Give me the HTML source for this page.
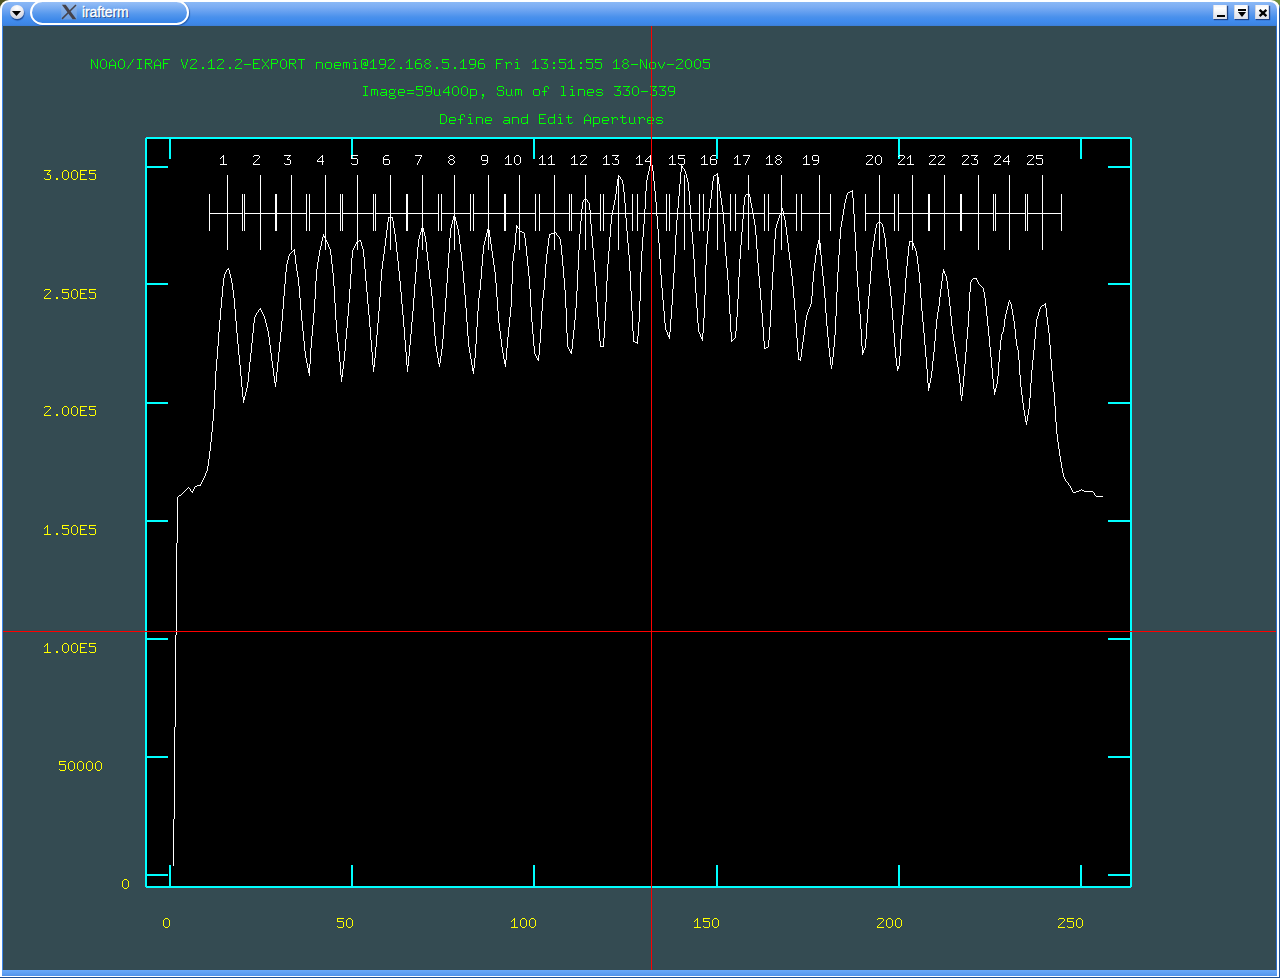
<!DOCTYPE html>
<html><head><meta charset="utf-8"><title>irafterm</title>
<style>

html,body{margin:0;padding:0;}
body{width:1280px;height:978px;overflow:hidden;background:#4d5222;position:relative;font-family:"Liberation Sans",sans-serif;}
#win{position:absolute;left:0;top:0;width:1280px;height:978px;background:#fff;border-radius:9px 9px 0 0;overflow:hidden;}
#edge{position:absolute;left:0;top:0;width:1279px;height:977px;border-right:1px solid #1c4f96;border-bottom:1px solid #1c4f96;}
#tb{position:absolute;left:2px;top:2px;width:1275px;height:24px;border-radius:7px 7px 0 0;
 background:linear-gradient(#8ab8f6 0px,#7cadf3 5px,#649ff0 10px,#4a91ec 15px,#3f8bee 19px,#3d84e2 23px,#3a7cd4 24px);}
#lb{position:absolute;left:2px;top:26px;width:1px;height:950px;background:#3d86e6;}
#rb{position:absolute;left:1276px;top:26px;width:1px;height:950px;background:#2c6cc4;}
#bb{position:absolute;left:2px;top:970px;width:1275px;height:6px;background:linear-gradient(#68a8f9,#5c9df1 60%,#4f92ea);}
#cv{position:absolute;left:3px;top:26px;width:1273px;height:944px;background:#344b52;}
#pill{position:absolute;left:30px;top:0px;width:155px;height:20.5px;border:2px solid #fff;border-radius:12.5px;box-sizing:content-box;
 background:linear-gradient(#96bff7 0px,#78acf2 6px,#5598ed 12px,#418bea 17px,#3884e8 20px);box-shadow:1px 1px 1px rgba(20,60,130,.55);}
#title{position:absolute;left:82px;top:3px;font-size:14px;line-height:18px;color:#fff;text-shadow:1px 1px 0 #1a4280;-webkit-text-stroke:0.35px #fff;letter-spacing:-0.1px;}
#menu{position:absolute;left:9.5px;top:5px;width:14px;height:14px;border-radius:50%;
 background:radial-gradient(circle at 50% 22%,#fff 0,#ececf2 40%,#d2d4de 75%,#c4c8d6 100%);box-shadow:0.5px 1.5px 1px rgba(15,50,120,.75);}
.btn{position:absolute;top:5px;width:14px;height:14px;background:linear-gradient(#f4f4f8 0,#fff 25%,#eceef3 60%,#dcdfe8 100%);box-shadow:1px 1px 1px rgba(15,45,110,.8),inset 1px 0 0 #d4d8e2,inset -1px 0 0 #d4d8e2;}
#trc{position:absolute;left:1268px;top:0;width:12px;height:12px;background:#6e8c3a;}
svg{position:absolute;left:0;top:0;}

</style></head><body>
<div id="trc"></div><div id="win"><div id="edge"></div><div id="tb"></div><div id="lb"></div><div id="rb"></div><div id="bb"></div><div id="cv"></div>
<div id="menu"></div><div id="pill"></div>
<div id="title">irafterm</div>
<div class="btn" style="left:1213px"></div><div class="btn" style="left:1234px"></div><div class="btn" style="left:1255px"></div>
<svg width="1280" height="978" viewBox="0 0 1280 978">
<g><rect x="61.2" y="4.3" width="15.6" height="15.2" fill="#a9bbd6" opacity=".38"/><path d="M61.9 4.8 L65.7 4.8 L76.4 19.3 L72.6 19.3 Z" fill="#45424a"/><path d="M76 5 L62 18.9" stroke="#47444c" stroke-width="1.5" fill="none"/></g>
<g fill="#000"><path d="M11.9 10.9 L21 10.9 L16.45 16 Z"/><rect x="1217" y="15" width="8" height="2"/>
<rect x="1238" y="9" width="8" height="2"/><path d="M1238 12 L1246 12 L1242 17 Z"/>
<path d="M1259.6 9.8 L1266.4 16.2 M1266.4 9.8 L1259.6 16.2" stroke="#000" stroke-width="2.3" fill="none"/></g>
<g shape-rendering="crispEdges">
<rect x="144.5" y="136.5" width="988" height="752" fill="none" stroke="#3e454d" stroke-width="1"/>
<rect x="146" y="138" width="985" height="749" fill="#000" stroke="#00ffff" stroke-width="2"/>
<rect x="145" y="137" width="1" height="1" fill="#3e454d"/>
<rect x="1131" y="137" width="1" height="1" fill="#3e454d"/>
<rect x="145" y="887" width="1" height="1" fill="#3e454d"/>
<rect x="1131" y="887" width="1" height="1" fill="#3e454d"/>
<rect x="169" y="139" width="2" height="20" fill="#00ffff"/>
<rect x="169" y="865" width="2" height="21" fill="#00ffff"/>
<rect x="351" y="139" width="2" height="20" fill="#00ffff"/>
<rect x="351" y="865" width="2" height="21" fill="#00ffff"/>
<rect x="533" y="139" width="2" height="20" fill="#00ffff"/>
<rect x="533" y="865" width="2" height="21" fill="#00ffff"/>
<rect x="716" y="139" width="2" height="20" fill="#00ffff"/>
<rect x="716" y="865" width="2" height="21" fill="#00ffff"/>
<rect x="898" y="139" width="2" height="20" fill="#00ffff"/>
<rect x="898" y="865" width="2" height="21" fill="#00ffff"/>
<rect x="1080" y="139" width="2" height="20" fill="#00ffff"/>
<rect x="1080" y="865" width="2" height="21" fill="#00ffff"/>
<rect x="147" y="166" width="21" height="2" fill="#00ffff"/>
<rect x="1108" y="166" width="22" height="2" fill="#00ffff"/>
<rect x="147" y="283" width="21" height="2" fill="#00ffff"/>
<rect x="1108" y="283" width="22" height="2" fill="#00ffff"/>
<rect x="147" y="402" width="21" height="2" fill="#00ffff"/>
<rect x="1108" y="402" width="22" height="2" fill="#00ffff"/>
<rect x="147" y="520" width="21" height="2" fill="#00ffff"/>
<rect x="1108" y="520" width="22" height="2" fill="#00ffff"/>
<rect x="147" y="638" width="21" height="2" fill="#00ffff"/>
<rect x="1108" y="638" width="22" height="2" fill="#00ffff"/>
<rect x="147" y="756" width="21" height="2" fill="#00ffff"/>
<rect x="1108" y="756" width="22" height="2" fill="#00ffff"/>
<rect x="147" y="874" width="21" height="2" fill="#00ffff"/>
<rect x="1108" y="874" width="22" height="2" fill="#00ffff"/>
<rect x="227" y="175" width="1" height="75" fill="#fff"/>
<rect x="260" y="175" width="1" height="75" fill="#fff"/>
<rect x="291" y="175" width="1" height="75" fill="#fff"/>
<rect x="325" y="175" width="1" height="75" fill="#fff"/>
<rect x="357" y="175" width="1" height="75" fill="#fff"/>
<rect x="390" y="175" width="1" height="75" fill="#fff"/>
<rect x="422" y="175" width="1" height="75" fill="#fff"/>
<rect x="454" y="175" width="1" height="75" fill="#fff"/>
<rect x="488" y="175" width="1" height="75" fill="#fff"/>
<rect x="519" y="175" width="1" height="75" fill="#fff"/>
<rect x="554" y="175" width="1" height="75" fill="#fff"/>
<rect x="585" y="175" width="1" height="75" fill="#fff"/>
<rect x="618" y="175" width="1" height="75" fill="#fff"/>
<rect x="651" y="175" width="1" height="75" fill="#fff"/>
<rect x="684" y="175" width="1" height="75" fill="#fff"/>
<rect x="717" y="175" width="1" height="75" fill="#fff"/>
<rect x="748" y="175" width="1" height="75" fill="#fff"/>
<rect x="781" y="175" width="1" height="75" fill="#fff"/>
<rect x="819" y="175" width="1" height="75" fill="#fff"/>
<rect x="879" y="175" width="1" height="75" fill="#fff"/>
<rect x="912" y="175" width="1" height="75" fill="#fff"/>
<rect x="944" y="175" width="1" height="75" fill="#fff"/>
<rect x="978" y="175" width="1" height="75" fill="#fff"/>
<rect x="1009" y="175" width="1" height="75" fill="#fff"/>
<rect x="1042" y="175" width="1" height="75" fill="#fff"/>
<rect x="209" y="213" width="34" height="1" fill="#fff"/>
<rect x="244" y="213" width="32" height="1" fill="#fff"/>
<rect x="276" y="213" width="31" height="1" fill="#fff"/>
<rect x="309" y="213" width="32" height="1" fill="#fff"/>
<rect x="342" y="213" width="32" height="1" fill="#fff"/>
<rect x="375" y="213" width="32" height="1" fill="#fff"/>
<rect x="407" y="213" width="32" height="1" fill="#fff"/>
<rect x="441" y="213" width="30" height="1" fill="#fff"/>
<rect x="473" y="213" width="32" height="1" fill="#fff"/>
<rect x="505" y="213" width="31" height="1" fill="#fff"/>
<rect x="539" y="213" width="31" height="1" fill="#fff"/>
<rect x="571" y="213" width="30" height="1" fill="#fff"/>
<rect x="603" y="213" width="30" height="1" fill="#fff"/>
<rect x="637" y="213" width="30" height="1" fill="#fff"/>
<rect x="669" y="213" width="31" height="1" fill="#fff"/>
<rect x="703" y="213" width="28" height="1" fill="#fff"/>
<rect x="735" y="213" width="30" height="1" fill="#fff"/>
<rect x="768" y="213" width="29" height="1" fill="#fff"/>
<rect x="801" y="213" width="30" height="1" fill="#fff"/>
<rect x="865" y="213" width="30" height="1" fill="#fff"/>
<rect x="898" y="213" width="31" height="1" fill="#fff"/>
<rect x="929" y="213" width="32" height="1" fill="#fff"/>
<rect x="961" y="213" width="33" height="1" fill="#fff"/>
<rect x="995" y="213" width="31" height="1" fill="#fff"/>
<rect x="1027" y="213" width="35" height="1" fill="#fff"/>
<rect x="209" y="194" width="1" height="37" fill="#fff"/>
<rect x="242" y="194" width="1" height="37" fill="#fff"/>
<rect x="244" y="194" width="1" height="37" fill="#fff"/>
<rect x="275" y="194" width="1" height="37" fill="#fff"/>
<rect x="276" y="194" width="1" height="37" fill="#fff"/>
<rect x="306" y="194" width="1" height="37" fill="#fff"/>
<rect x="309" y="194" width="1" height="37" fill="#fff"/>
<rect x="340" y="194" width="1" height="37" fill="#fff"/>
<rect x="342" y="194" width="1" height="37" fill="#fff"/>
<rect x="373" y="194" width="1" height="37" fill="#fff"/>
<rect x="375" y="194" width="1" height="37" fill="#fff"/>
<rect x="406" y="194" width="1" height="37" fill="#fff"/>
<rect x="407" y="194" width="1" height="37" fill="#fff"/>
<rect x="438" y="194" width="1" height="37" fill="#fff"/>
<rect x="441" y="194" width="1" height="37" fill="#fff"/>
<rect x="470" y="194" width="1" height="37" fill="#fff"/>
<rect x="473" y="194" width="1" height="37" fill="#fff"/>
<rect x="504" y="194" width="1" height="37" fill="#fff"/>
<rect x="505" y="194" width="1" height="37" fill="#fff"/>
<rect x="535" y="194" width="1" height="37" fill="#fff"/>
<rect x="539" y="194" width="1" height="37" fill="#fff"/>
<rect x="569" y="194" width="1" height="37" fill="#fff"/>
<rect x="571" y="194" width="1" height="37" fill="#fff"/>
<rect x="600" y="194" width="1" height="37" fill="#fff"/>
<rect x="603" y="194" width="1" height="37" fill="#fff"/>
<rect x="632" y="194" width="1" height="37" fill="#fff"/>
<rect x="637" y="194" width="1" height="37" fill="#fff"/>
<rect x="666" y="194" width="1" height="37" fill="#fff"/>
<rect x="669" y="194" width="1" height="37" fill="#fff"/>
<rect x="699" y="194" width="1" height="37" fill="#fff"/>
<rect x="703" y="194" width="1" height="37" fill="#fff"/>
<rect x="730" y="194" width="1" height="37" fill="#fff"/>
<rect x="735" y="194" width="1" height="37" fill="#fff"/>
<rect x="764" y="194" width="1" height="37" fill="#fff"/>
<rect x="768" y="194" width="1" height="37" fill="#fff"/>
<rect x="796" y="194" width="1" height="37" fill="#fff"/>
<rect x="801" y="194" width="1" height="37" fill="#fff"/>
<rect x="830" y="194" width="1" height="37" fill="#fff"/>
<rect x="865" y="194" width="1" height="37" fill="#fff"/>
<rect x="894" y="194" width="1" height="37" fill="#fff"/>
<rect x="898" y="194" width="1" height="37" fill="#fff"/>
<rect x="928" y="194" width="1" height="37" fill="#fff"/>
<rect x="929" y="194" width="1" height="37" fill="#fff"/>
<rect x="960" y="194" width="1" height="37" fill="#fff"/>
<rect x="961" y="194" width="1" height="37" fill="#fff"/>
<rect x="993" y="194" width="1" height="37" fill="#fff"/>
<rect x="995" y="194" width="1" height="37" fill="#fff"/>
<rect x="1025" y="194" width="1" height="37" fill="#fff"/>
<rect x="1027" y="194" width="1" height="37" fill="#fff"/>
<rect x="1061" y="194" width="1" height="37" fill="#fff"/>
<path d="M173 819h1v47h-1zM174 727h1v92h-1zM175 635h1v92h-1zM176 543h1v92h-1zM177 497h1v46h-1zM178 496h1v1h-1zM179 495h1v1h-1zM180 495h1v1h-1zM181 494h1v1h-1zM182 493h1v1h-1zM183 492h1v1h-1zM184 491h1v1h-1zM185 490h1v1h-1zM186 489h1v1h-1zM187 488h1v1h-1zM188 487h1v1h-1zM189 488h1v1h-1zM190 489h1v2h-1zM191 491h1v1h-1zM192 491h1v2h-1zM193 489h1v2h-1zM194 487h1v2h-1zM195 486h1v1h-1zM196 486h1v1h-1zM197 485h1v1h-1zM198 485h1v1h-1zM199 485h1v1h-1zM200 484h1v2h-1zM201 482h1v2h-1zM202 480h1v2h-1zM203 478h1v2h-1zM204 476h1v2h-1zM205 473h1v3h-1zM206 471h1v2h-1zM207 466h1v5h-1zM208 459h1v7h-1zM209 451h1v8h-1zM210 442h1v9h-1zM211 432h1v10h-1zM212 421h1v11h-1zM213 409h1v12h-1zM214 390h1v19h-1zM215 371h1v19h-1zM216 359h1v12h-1zM217 346h1v13h-1zM218 332h1v14h-1zM219 320h1v12h-1zM220 308h1v12h-1zM221 297h1v11h-1zM222 286h1v11h-1zM223 278h1v8h-1zM224 274h1v4h-1zM225 272h1v2h-1zM226 270h1v2h-1zM227 269h1v1h-1zM228 268h1v2h-1zM229 270h1v4h-1zM230 274h1v4h-1zM231 278h1v5h-1zM232 283h1v7h-1zM233 290h1v8h-1zM234 298h1v11h-1zM235 309h1v12h-1zM236 321h1v12h-1zM237 333h1v11h-1zM238 344h1v11h-1zM239 355h1v10h-1zM240 365h1v11h-1zM241 376h1v11h-1zM242 387h1v10h-1zM243 397h1v6h-1zM244 396h1v4h-1zM245 392h1v4h-1zM246 388h1v4h-1zM247 382h1v6h-1zM248 372h1v10h-1zM249 362h1v10h-1zM250 353h1v9h-1zM251 343h1v10h-1zM252 333h1v10h-1zM253 323h1v10h-1zM254 317h1v6h-1zM255 315h1v2h-1zM256 313h1v2h-1zM257 312h1v1h-1zM258 310h1v2h-1zM259 309h1v1h-1zM260 308h1v2h-1zM261 310h1v2h-1zM262 312h1v2h-1zM263 314h1v2h-1zM264 316h1v3h-1zM265 319h1v4h-1zM266 323h1v4h-1zM267 327h1v4h-1zM268 331h1v6h-1zM269 337h1v8h-1zM270 345h1v8h-1zM271 353h1v8h-1zM272 361h1v7h-1zM273 368h1v8h-1zM274 376h1v7h-1zM275 382h1v5h-1zM276 372h1v10h-1zM277 362h1v10h-1zM278 352h1v10h-1zM279 342h1v10h-1zM280 332h1v10h-1zM281 321h1v11h-1zM282 309h1v12h-1zM283 296h1v13h-1zM284 284h1v12h-1zM285 272h1v12h-1zM286 264h1v8h-1zM287 260h1v4h-1zM288 256h1v4h-1zM289 254h1v2h-1zM290 253h1v1h-1zM291 252h1v1h-1zM292 251h1v1h-1zM293 250h1v1h-1zM294 249h1v6h-1zM295 255h1v9h-1zM296 264h1v7h-1zM297 271h1v6h-1zM298 277h1v9h-1zM299 286h1v12h-1zM300 298h1v12h-1zM301 310h1v11h-1zM302 321h1v10h-1zM303 331h1v10h-1zM304 341h1v10h-1zM305 351h1v7h-1zM306 358h1v5h-1zM307 363h1v5h-1zM308 368h1v5h-1zM309 364h1v12h-1zM310 348h1v16h-1zM311 336h1v12h-1zM312 325h1v11h-1zM313 313h1v12h-1zM314 299h1v14h-1zM315 281h1v18h-1zM316 269h1v12h-1zM317 262h1v7h-1zM318 256h1v6h-1zM319 250h1v6h-1zM320 246h1v4h-1zM321 241h1v5h-1zM322 237h1v4h-1zM323 234h1v3h-1zM324 236h1v2h-1zM325 238h1v2h-1zM326 240h1v2h-1zM327 242h1v2h-1zM328 244h1v3h-1zM329 247h1v2h-1zM330 249h1v6h-1zM331 255h1v9h-1zM332 264h1v9h-1zM333 273h1v13h-1zM334 286h1v17h-1zM335 303h1v17h-1zM336 320h1v13h-1zM337 333h1v9h-1zM338 342h1v9h-1zM339 351h1v11h-1zM340 362h1v13h-1zM341 375h1v7h-1zM342 369h1v8h-1zM343 361h1v8h-1zM344 351h1v10h-1zM345 339h1v12h-1zM346 328h1v11h-1zM347 316h1v12h-1zM348 303h1v13h-1zM349 289h1v14h-1zM350 274h1v15h-1zM351 258h1v16h-1zM352 250h1v8h-1zM353 248h1v2h-1zM354 246h1v2h-1zM355 244h1v2h-1zM356 242h1v2h-1zM357 241h1v1h-1zM358 241h1v1h-1zM359 240h1v1h-1zM360 240h1v2h-1zM361 242h1v4h-1zM362 246h1v3h-1zM363 249h1v8h-1zM364 257h1v12h-1zM365 269h1v12h-1zM366 281h1v11h-1zM367 292h1v12h-1zM368 304h1v11h-1zM369 315h1v12h-1zM370 327h1v13h-1zM371 340h1v12h-1zM372 352h1v13h-1zM373 365h1v7h-1zM374 358h1v9h-1zM375 347h1v11h-1zM376 335h1v12h-1zM377 323h1v12h-1zM378 311h1v12h-1zM379 297h1v14h-1zM380 281h1v16h-1zM381 269h1v12h-1zM382 261h1v8h-1zM383 254h1v7h-1zM384 246h1v8h-1zM385 238h1v8h-1zM386 230h1v8h-1zM387 222h1v8h-1zM388 217h1v5h-1zM389 217h1v1h-1zM390 217h1v1h-1zM391 217h1v1h-1zM392 217h1v4h-1zM393 221h1v7h-1zM394 228h1v6h-1zM395 234h1v8h-1zM396 242h1v10h-1zM397 252h1v9h-1zM398 261h1v10h-1zM399 271h1v10h-1zM400 281h1v11h-1zM401 292h1v12h-1zM402 304h1v11h-1zM403 315h1v12h-1zM404 327h1v13h-1zM405 340h1v12h-1zM406 352h1v13h-1zM407 365h1v7h-1zM408 356h1v10h-1zM409 345h1v11h-1zM410 334h1v11h-1zM411 322h1v12h-1zM412 311h1v11h-1zM413 298h1v13h-1zM414 284h1v14h-1zM415 272h1v12h-1zM416 259h1v13h-1zM417 247h1v12h-1zM418 239h1v8h-1zM419 235h1v4h-1zM420 232h1v3h-1zM421 228h1v4h-1zM422 226h1v2h-1zM423 228h1v4h-1zM424 232h1v4h-1zM425 236h1v6h-1zM426 242h1v10h-1zM427 252h1v9h-1zM428 261h1v9h-1zM429 270h1v9h-1zM430 279h1v8h-1zM431 287h1v9h-1zM432 296h1v12h-1zM433 308h1v14h-1zM434 322h1v14h-1zM435 336h1v10h-1zM436 346h1v6h-1zM437 352h1v6h-1zM438 358h1v6h-1zM439 363h1v4h-1zM440 356h1v7h-1zM441 349h1v7h-1zM442 339h1v10h-1zM443 325h1v14h-1zM444 312h1v13h-1zM445 298h1v14h-1zM446 283h1v15h-1zM447 268h1v15h-1zM448 253h1v15h-1zM449 238h1v15h-1zM450 228h1v10h-1zM451 224h1v4h-1zM452 220h1v4h-1zM453 216h1v4h-1zM454 214h1v3h-1zM455 217h1v4h-1zM456 221h1v4h-1zM457 225h1v4h-1zM458 229h1v6h-1zM459 235h1v9h-1zM460 244h1v8h-1zM461 252h1v9h-1zM462 261h1v10h-1zM463 271h1v12h-1zM464 283h1v12h-1zM465 295h1v13h-1zM466 308h1v14h-1zM467 322h1v14h-1zM468 336h1v11h-1zM469 347h1v6h-1zM470 353h1v6h-1zM471 359h1v6h-1zM472 365h1v6h-1zM473 368h1v6h-1zM474 358h1v10h-1zM475 344h1v14h-1zM476 327h1v17h-1zM477 311h1v16h-1zM478 298h1v13h-1zM479 290h1v8h-1zM480 279h1v11h-1zM481 266h1v13h-1zM482 254h1v12h-1zM483 245h1v9h-1zM484 241h1v4h-1zM485 237h1v4h-1zM486 233h1v4h-1zM487 229h1v4h-1zM488 226h1v4h-1zM489 230h1v7h-1zM490 237h1v7h-1zM491 244h1v7h-1zM492 251h1v7h-1zM493 258h1v7h-1zM494 265h1v7h-1zM495 272h1v11h-1zM496 283h1v14h-1zM497 297h1v14h-1zM498 311h1v12h-1zM499 323h1v8h-1zM500 331h1v8h-1zM501 339h1v8h-1zM502 347h1v6h-1zM503 353h1v6h-1zM504 359h1v5h-1zM505 360h1v7h-1zM506 348h1v12h-1zM507 337h1v11h-1zM508 327h1v10h-1zM509 317h1v10h-1zM510 307h1v10h-1zM511 284h1v23h-1zM512 261h1v23h-1zM513 253h1v8h-1zM514 245h1v8h-1zM515 233h1v12h-1zM516 225h1v8h-1zM517 226h1v2h-1zM518 228h1v1h-1zM519 229h1v2h-1zM520 231h1v1h-1zM521 231h1v1h-1zM522 232h1v1h-1zM523 232h1v1h-1zM524 233h1v5h-1zM525 238h1v8h-1zM526 246h1v10h-1zM527 256h1v10h-1zM528 266h1v10h-1zM529 276h1v13h-1zM530 289h1v18h-1zM531 307h1v15h-1zM532 322h1v12h-1zM533 334h1v12h-1zM534 346h1v8h-1zM535 354h1v2h-1zM536 356h1v2h-1zM537 358h1v2h-1zM538 355h1v6h-1zM539 343h1v12h-1zM540 329h1v14h-1zM541 311h1v18h-1zM542 298h1v13h-1zM543 290h1v8h-1zM544 278h1v12h-1zM545 264h1v14h-1zM546 254h1v10h-1zM547 246h1v8h-1zM548 238h1v8h-1zM549 234h1v4h-1zM550 234h1v1h-1zM551 233h1v1h-1zM552 233h1v1h-1zM553 233h1v1h-1zM554 232h1v1h-1zM555 232h1v1h-1zM556 233h1v2h-1zM557 235h1v1h-1zM558 236h1v1h-1zM559 237h1v2h-1zM560 239h1v6h-1zM561 245h1v10h-1zM562 255h1v11h-1zM563 266h1v12h-1zM564 278h1v12h-1zM565 290h1v18h-1zM566 308h1v25h-1zM567 333h1v14h-1zM568 347h1v2h-1zM569 349h1v2h-1zM570 351h1v2h-1zM571 349h1v5h-1zM572 339h1v10h-1zM573 330h1v9h-1zM574 320h1v10h-1zM575 308h1v12h-1zM576 291h1v17h-1zM577 270h1v21h-1zM578 250h1v20h-1zM579 234h1v16h-1zM580 221h1v13h-1zM581 209h1v12h-1zM582 202h1v7h-1zM583 200h1v2h-1zM584 199h1v1h-1zM585 198h1v1h-1zM586 199h1v1h-1zM587 200h1v2h-1zM588 202h1v1h-1zM589 203h1v7h-1zM590 210h1v14h-1zM591 224h1v12h-1zM592 236h1v12h-1zM593 248h1v12h-1zM594 260h1v12h-1zM595 272h1v14h-1zM596 286h1v16h-1zM597 302h1v15h-1zM598 317h1v12h-1zM599 329h1v12h-1zM600 341h1v6h-1zM601 346h1v1h-1zM602 346h1v1h-1zM603 338h1v9h-1zM604 321h1v17h-1zM605 302h1v19h-1zM606 281h1v21h-1zM607 264h1v17h-1zM608 251h1v13h-1zM609 237h1v14h-1zM610 224h1v13h-1zM611 215h1v9h-1zM612 210h1v5h-1zM613 205h1v5h-1zM614 200h1v5h-1zM615 194h1v6h-1zM616 186h1v8h-1zM617 179h1v7h-1zM618 175h1v4h-1zM619 176h1v1h-1zM620 177h1v2h-1zM621 179h1v1h-1zM622 180h1v4h-1zM623 184h1v8h-1zM624 192h1v11h-1zM625 203h1v15h-1zM626 218h1v13h-1zM627 231h1v12h-1zM628 243h1v12h-1zM629 255h1v16h-1zM630 271h1v20h-1zM631 291h1v20h-1zM632 311h1v20h-1zM633 331h1v11h-1zM634 341h1v1h-1zM635 342h1v1h-1zM636 342h1v1h-1zM637 336h1v8h-1zM638 322h1v14h-1zM639 301h1v21h-1zM640 272h1v29h-1zM641 251h1v21h-1zM642 237h1v14h-1zM643 224h1v13h-1zM644 209h1v15h-1zM645 191h1v18h-1zM646 180h1v11h-1zM647 175h1v5h-1zM648 171h1v4h-1zM649 166h1v5h-1zM650 163h1v3h-1zM651 164h1v1h-1zM652 165h1v6h-1zM653 171h1v10h-1zM654 181h1v10h-1zM655 191h1v11h-1zM656 202h1v14h-1zM657 216h1v13h-1zM658 229h1v14h-1zM659 243h1v16h-1zM660 259h1v16h-1zM661 275h1v13h-1zM662 288h1v12h-1zM663 300h1v11h-1zM664 311h1v12h-1zM665 323h1v7h-1zM666 330h1v2h-1zM667 332h1v3h-1zM668 335h1v2h-1zM669 332h1v7h-1zM670 319h1v13h-1zM671 305h1v14h-1zM672 289h1v16h-1zM673 273h1v16h-1zM674 255h1v18h-1zM675 235h1v20h-1zM676 220h1v15h-1zM677 208h1v12h-1zM678 196h1v12h-1zM679 184h1v12h-1zM680 172h1v12h-1zM681 165h1v7h-1zM682 166h1v2h-1zM683 168h1v1h-1zM684 169h1v2h-1zM685 171h1v3h-1zM686 174h1v4h-1zM687 178h1v4h-1zM688 182h1v9h-1zM689 191h1v14h-1zM690 205h1v14h-1zM691 219h1v13h-1zM692 232h1v12h-1zM693 244h1v15h-1zM694 259h1v18h-1zM695 277h1v16h-1zM696 293h1v15h-1zM697 308h1v15h-1zM698 323h1v9h-1zM699 332h1v2h-1zM700 334h1v3h-1zM701 337h1v2h-1zM702 333h1v8h-1zM703 318h1v15h-1zM704 295h1v23h-1zM705 265h1v30h-1zM706 244h1v21h-1zM707 231h1v13h-1zM708 219h1v12h-1zM709 208h1v11h-1zM710 199h1v9h-1zM711 190h1v9h-1zM712 181h1v9h-1zM713 176h1v5h-1zM714 175h1v1h-1zM715 175h1v1h-1zM716 174h1v1h-1zM717 173h1v4h-1zM718 177h1v7h-1zM719 184h1v7h-1zM720 191h1v7h-1zM721 198h1v7h-1zM722 205h1v7h-1zM723 212h1v12h-1zM724 224h1v18h-1zM725 242h1v14h-1zM726 256h1v12h-1zM727 268h1v12h-1zM728 280h1v15h-1zM729 295h1v19h-1zM730 314h1v18h-1zM731 332h1v10h-1zM732 340h1v1h-1zM733 339h1v1h-1zM734 338h1v1h-1zM735 331h1v7h-1zM736 317h1v14h-1zM737 299h1v18h-1zM738 277h1v22h-1zM739 259h1v18h-1zM740 245h1v14h-1zM741 232h1v13h-1zM742 219h1v13h-1zM743 205h1v14h-1zM744 197h1v8h-1zM745 195h1v2h-1zM746 194h1v1h-1zM747 194h1v1h-1zM748 194h1v1h-1zM749 194h1v3h-1zM750 197h1v6h-1zM751 203h1v5h-1zM752 208h1v5h-1zM753 213h1v6h-1zM754 219h1v6h-1zM755 225h1v10h-1zM756 235h1v14h-1zM757 249h1v14h-1zM758 263h1v13h-1zM759 276h1v12h-1zM760 288h1v12h-1zM761 300h1v13h-1zM762 313h1v14h-1zM763 327h1v14h-1zM764 341h1v8h-1zM765 348h1v1h-1zM766 347h1v1h-1zM767 347h1v1h-1zM768 340h1v7h-1zM769 327h1v13h-1zM770 310h1v17h-1zM771 290h1v20h-1zM772 272h1v18h-1zM773 255h1v17h-1zM774 239h1v16h-1zM775 228h1v11h-1zM776 224h1v4h-1zM777 221h1v3h-1zM778 218h1v3h-1zM779 215h1v3h-1zM780 213h1v2h-1zM781 210h1v3h-1zM782 208h1v3h-1zM783 211h1v5h-1zM784 216h1v4h-1zM785 220h1v7h-1zM786 227h1v8h-1zM787 235h1v8h-1zM788 243h1v9h-1zM789 252h1v8h-1zM790 260h1v8h-1zM791 268h1v8h-1zM792 276h1v10h-1zM793 286h1v12h-1zM794 298h1v12h-1zM795 310h1v13h-1zM796 323h1v15h-1zM797 338h1v14h-1zM798 352h1v8h-1zM799 359h1v1h-1zM800 357h1v4h-1zM801 349h1v8h-1zM802 342h1v7h-1zM803 335h1v7h-1zM804 327h1v8h-1zM805 320h1v7h-1zM806 315h1v5h-1zM807 312h1v3h-1zM808 309h1v3h-1zM809 307h1v2h-1zM810 304h1v3h-1zM811 296h1v8h-1zM812 282h1v14h-1zM813 271h1v11h-1zM814 263h1v8h-1zM815 255h1v8h-1zM816 248h1v7h-1zM817 244h1v4h-1zM818 240h1v4h-1zM819 237h1v6h-1zM820 243h1v12h-1zM821 255h1v11h-1zM822 266h1v10h-1zM823 276h1v10h-1zM824 286h1v12h-1zM825 298h1v15h-1zM826 313h1v13h-1zM827 326h1v11h-1zM828 337h1v11h-1zM829 348h1v9h-1zM830 357h1v8h-1zM831 365h1v4h-1zM832 357h1v8h-1zM833 347h1v10h-1zM834 335h1v12h-1zM835 316h1v19h-1zM836 292h1v24h-1zM837 272h1v20h-1zM838 255h1v17h-1zM839 239h1v16h-1zM840 227h1v12h-1zM841 221h1v6h-1zM842 215h1v6h-1zM843 209h1v6h-1zM844 203h1v6h-1zM845 199h1v4h-1zM846 195h1v4h-1zM847 193h1v2h-1zM848 192h1v1h-1zM849 192h1v1h-1zM850 191h1v1h-1zM851 191h1v1h-1zM852 190h1v8h-1zM853 198h1v16h-1zM854 214h1v18h-1zM855 232h1v19h-1zM856 251h1v20h-1zM857 271h1v16h-1zM858 287h1v14h-1zM859 301h1v13h-1zM860 314h1v15h-1zM861 329h1v17h-1zM862 346h1v9h-1zM863 350h1v3h-1zM864 348h1v2h-1zM865 339h1v9h-1zM866 323h1v16h-1zM867 309h1v14h-1zM868 296h1v13h-1zM869 284h1v12h-1zM870 271h1v13h-1zM871 257h1v14h-1zM872 247h1v10h-1zM873 241h1v6h-1zM874 234h1v7h-1zM875 228h1v6h-1zM876 224h1v4h-1zM877 223h1v1h-1zM878 222h1v1h-1zM879 221h1v1h-1zM880 222h1v1h-1zM881 223h1v1h-1zM882 224h1v3h-1zM883 227h1v6h-1zM884 233h1v5h-1zM885 238h1v9h-1zM886 247h1v12h-1zM887 259h1v11h-1zM888 270h1v8h-1zM889 278h1v8h-1zM890 286h1v10h-1zM891 296h1v12h-1zM892 308h1v12h-1zM893 320h1v13h-1zM894 333h1v14h-1zM895 347h1v11h-1zM896 358h1v8h-1zM897 366h1v5h-1zM898 366h1v3h-1zM899 356h1v10h-1zM900 339h1v17h-1zM901 325h1v14h-1zM902 315h1v10h-1zM903 305h1v10h-1zM904 293h1v12h-1zM905 278h1v15h-1zM906 266h1v12h-1zM907 256h1v10h-1zM908 246h1v10h-1zM909 241h1v5h-1zM910 241h1v1h-1zM911 241h1v1h-1zM912 241h1v2h-1zM913 243h1v3h-1zM914 246h1v2h-1zM915 248h1v3h-1zM916 251h1v5h-1zM917 256h1v8h-1zM918 264h1v8h-1zM919 272h1v11h-1zM920 283h1v15h-1zM921 298h1v13h-1zM922 311h1v11h-1zM923 322h1v11h-1zM924 333h1v12h-1zM925 345h1v12h-1zM926 357h1v12h-1zM927 369h1v14h-1zM928 383h1v8h-1zM929 383h1v5h-1zM930 378h1v5h-1zM931 371h1v7h-1zM932 361h1v10h-1zM933 352h1v9h-1zM934 341h1v11h-1zM935 329h1v12h-1zM936 319h1v10h-1zM937 312h1v7h-1zM938 306h1v6h-1zM939 297h1v9h-1zM940 289h1v8h-1zM941 281h1v8h-1zM942 273h1v8h-1zM943 269h1v4h-1zM944 271h1v3h-1zM945 274h1v2h-1zM946 276h1v5h-1zM947 281h1v8h-1zM948 289h1v8h-1zM949 297h1v9h-1zM950 306h1v10h-1zM951 316h1v10h-1zM952 326h1v8h-1zM953 334h1v7h-1zM954 341h1v6h-1zM955 347h1v7h-1zM956 354h1v7h-1zM957 361h1v6h-1zM958 367h1v7h-1zM959 374h1v9h-1zM960 383h1v12h-1zM961 395h1v6h-1zM962 387h1v9h-1zM963 376h1v11h-1zM964 364h1v12h-1zM965 352h1v12h-1zM966 339h1v13h-1zM967 327h1v12h-1zM968 311h1v16h-1zM969 292h1v19h-1zM970 282h1v10h-1zM971 280h1v2h-1zM972 279h1v1h-1zM973 278h1v1h-1zM974 278h1v1h-1zM975 278h1v1h-1zM976 278h1v2h-1zM977 280h1v2h-1zM978 282h1v2h-1zM979 284h1v1h-1zM980 285h1v1h-1zM981 286h1v1h-1zM982 287h1v1h-1zM983 288h1v4h-1zM984 292h1v6h-1zM985 298h1v8h-1zM986 306h1v10h-1zM987 316h1v10h-1zM988 326h1v10h-1zM989 336h1v11h-1zM990 347h1v10h-1zM991 357h1v11h-1zM992 368h1v11h-1zM993 379h1v10h-1zM994 389h1v6h-1zM995 388h1v4h-1zM996 384h1v4h-1zM997 376h1v8h-1zM998 362h1v14h-1zM999 350h1v12h-1zM1000 340h1v10h-1zM1001 334h1v6h-1zM1002 332h1v2h-1zM1003 327h1v5h-1zM1004 319h1v8h-1zM1005 314h1v5h-1zM1006 310h1v4h-1zM1007 306h1v4h-1zM1008 302h1v4h-1zM1009 300h1v2h-1zM1010 302h1v2h-1zM1011 304h1v5h-1zM1012 309h1v6h-1zM1013 315h1v6h-1zM1014 321h1v8h-1zM1015 329h1v10h-1zM1016 339h1v7h-1zM1017 346h1v4h-1zM1018 350h1v10h-1zM1019 360h1v15h-1zM1020 375h1v12h-1zM1021 387h1v8h-1zM1022 395h1v8h-1zM1023 403h1v7h-1zM1024 410h1v6h-1zM1025 416h1v6h-1zM1026 421h1v4h-1zM1027 415h1v6h-1zM1028 409h1v6h-1zM1029 398h1v11h-1zM1030 383h1v15h-1zM1031 370h1v13h-1zM1032 360h1v10h-1zM1033 350h1v10h-1zM1034 339h1v11h-1zM1035 327h1v12h-1zM1036 319h1v8h-1zM1037 316h1v3h-1zM1038 312h1v4h-1zM1039 309h1v3h-1zM1040 307h1v2h-1zM1041 306h1v1h-1zM1042 305h1v1h-1zM1043 305h1v1h-1zM1044 304h1v1h-1zM1045 303h1v5h-1zM1046 308h1v9h-1zM1047 317h1v8h-1zM1048 325h1v8h-1zM1049 333h1v12h-1zM1050 345h1v14h-1zM1051 359h1v12h-1zM1052 371h1v11h-1zM1053 382h1v10h-1zM1054 392h1v14h-1zM1055 406h1v16h-1zM1056 422h1v12h-1zM1057 434h1v8h-1zM1058 442h1v7h-1zM1059 449h1v7h-1zM1060 456h1v6h-1zM1061 462h1v6h-1zM1062 468h1v5h-1zM1063 473h1v4h-1zM1064 477h1v2h-1zM1065 479h1v2h-1zM1066 481h1v1h-1zM1067 482h1v1h-1zM1068 483h1v2h-1zM1069 485h1v1h-1zM1070 486h1v2h-1zM1071 488h1v2h-1zM1072 490h1v2h-1zM1073 492h1v1h-1zM1074 492h1v1h-1zM1075 492h1v1h-1zM1076 491h1v1h-1zM1077 491h1v1h-1zM1078 491h1v1h-1zM1079 490h1v1h-1zM1080 490h1v1h-1zM1081 489h1v1h-1zM1082 490h1v1h-1zM1083 490h1v1h-1zM1084 491h1v1h-1zM1085 491h1v1h-1zM1086 491h1v1h-1zM1087 491h1v1h-1zM1088 491h1v1h-1zM1089 491h1v1h-1zM1090 491h1v1h-1zM1091 491h1v1h-1zM1092 491h1v1h-1zM1093 492h1v1h-1zM1094 493h1v2h-1zM1095 495h1v1h-1zM1096 496h1v1h-1zM1097 496h1v1h-1zM1098 496h1v1h-1zM1099 496h1v1h-1zM1100 496h1v1h-1zM1101 496h1v1h-1zM1102 496h1v1h-1z" fill="#fff"/>
</g>
<path d="M91 60.5h2M96 67.5h2M91.5 59v1M91.5 61v8M93.5 61v2M94.5 63v2M95.5 65v2M97.5 59v8M97.5 68v1M102 59.5h3M102 68.5h3M100.5 61v6M101.5 60v1M101.5 67v1M105.5 60v1M105.5 67v1M106.5 61v6M109 65.5h7M109.5 62v3M109.5 66v3M110.5 61v1M111.5 60v1M112.5 59v1M113.5 60v1M114.5 61v1M115.5 62v3M115.5 66v3M120 59.5h3M120 68.5h3M118.5 61v6M119.5 60v1M119.5 67v1M123.5 60v1M123.5 67v1M124.5 61v6M127.5 68v1M128.5 66v2M129.5 65v1M130.5 63v2M131.5 62v1M132.5 60v2M133.5 59v1M137 59.5h5M137 68.5h5M139.5 60v8M145 59.5h6M145 63.5h6M145.5 60v3M145.5 64v5M148.5 64v1M149.5 65v1M150.5 66v1M151.5 60v3M151.5 67v2M154 65.5h7M154.5 62v3M154.5 66v3M155.5 61v1M156.5 60v1M157.5 59v1M158.5 60v1M159.5 61v1M160.5 62v3M160.5 66v3M163 59.5h7M163 63.5h5M163.5 60v3M163.5 64v5M181.5 59v3M182.5 62v3M183.5 65v3M184.5 68v1M185.5 65v3M186.5 62v3M187.5 59v3M191 59.5h5M190 68.5h7M190.5 60v1M190.5 67v1M191.5 66v1M192.5 65v1M193.5 64v1M194.5 63v1M195.5 62v1M196.5 60v2M202 67.5h2M202 68.5h2M210 60.5h2M208 68.5h7M208.5 62v1M209.5 61v1M211.5 59v1M211.5 61v7M218 59.5h5M217 68.5h7M217.5 60v1M217.5 67v1M218.5 66v1M219.5 65v1M220.5 64v1M221.5 63v1M222.5 62v1M223.5 60v2M229 67.5h2M229 68.5h2M236 59.5h5M235 68.5h7M235.5 60v1M235.5 67v1M236.5 66v1M237.5 65v1M238.5 64v1M239.5 63v1M240.5 62v1M241.5 60v2M244 64.5h7M253 59.5h7M253 63.5h5M253 68.5h7M253.5 60v3M253.5 64v4M262.5 59v2M262.5 67v2M263.5 61v1M263.5 66v1M264.5 62v1M264.5 65v1M265.5 63v2M266.5 62v1M266.5 65v1M267.5 61v1M267.5 66v1M268.5 59v2M268.5 67v2M271 59.5h6M271 63.5h6M271.5 60v3M271.5 64v5M277.5 60v3M282 59.5h3M282 68.5h3M280.5 61v6M281.5 60v1M281.5 67v1M285.5 60v1M285.5 67v1M286.5 61v6M289 59.5h6M289 63.5h6M289.5 60v3M289.5 64v5M292.5 64v1M293.5 65v1M294.5 66v1M295.5 60v3M295.5 67v2M298 59.5h7M301.5 60v9M316 62.5h6M316.5 63v6M322.5 63v6M326 62.5h5M326 68.5h5M325.5 63v5M331.5 63v5M335 62.5h5M334 65.5h7M335 68.5h5M334.5 63v2M334.5 66v2M340.5 63v2M343 62.5h6M343.5 63v6M346.5 63v5M349.5 63v6M354 59.5h2M353 62.5h3M353 68.5h5M355.5 63v5M362 59.5h5M364 62.5h2M364 65.5h4M362 68.5h5M361.5 60v8M363.5 63v2M365.5 63v2M367.5 60v5M372 60.5h2M370 68.5h7M370.5 62v1M371.5 61v1M373.5 59v1M373.5 61v7M380 59.5h5M380 64.5h6M380 68.5h4M379.5 60v4M384.5 67v1M385.5 60v4M385.5 65v2M389 59.5h5M388 68.5h7M388.5 60v1M388.5 67v1M389.5 66v1M390.5 65v1M391.5 64v1M392.5 63v1M393.5 62v1M394.5 60v2M400 67.5h2M400 68.5h2M408 60.5h2M406 68.5h7M406.5 62v1M407.5 61v1M409.5 59v1M409.5 61v7M417 59.5h4M415 63.5h6M416 68.5h5M415.5 61v2M415.5 64v4M416.5 60v1M421.5 64v4M426 59.5h3M426 63.5h3M426 68.5h3M424.5 61v1M424.5 65v2M425.5 60v1M425.5 62v1M425.5 64v1M425.5 67v1M429.5 60v1M429.5 62v1M429.5 64v1M429.5 67v1M430.5 61v1M430.5 65v2M436 67.5h2M436 68.5h2M442 59.5h7M442 62.5h6M443 68.5h5M442.5 60v2M442.5 67v1M448.5 63v5M454 67.5h2M454 68.5h2M462 60.5h2M460 68.5h7M460.5 62v1M461.5 61v1M463.5 59v1M463.5 61v7M470 59.5h5M470 64.5h6M470 68.5h4M469.5 60v4M474.5 67v1M475.5 60v4M475.5 65v2M480 59.5h4M478 63.5h6M479 68.5h5M478.5 61v2M478.5 64v4M479.5 60v1M484.5 64v4M496 59.5h7M496 63.5h5M496.5 60v3M496.5 64v5M505 62.5h2M508 62.5h3M506 63.5h2M506.5 64v5M511.5 63v2M516 59.5h2M515 62.5h3M515 68.5h5M517.5 63v5M534 60.5h2M532 68.5h7M532.5 62v1M533.5 61v1M535.5 59v1M535.5 61v7M541 59.5h7M544 63.5h3M542 68.5h5M541.5 67v1M544.5 62v1M545.5 61v1M546.5 60v1M547.5 64v4M553 62.5h2M553 63.5h2M553 67.5h2M553 68.5h2M559 59.5h7M559 62.5h6M560 68.5h5M559.5 60v2M559.5 67v1M565.5 63v5M570 60.5h2M568 68.5h7M568.5 62v1M569.5 61v1M571.5 59v1M571.5 61v7M580 62.5h2M580 63.5h2M580 67.5h2M580 68.5h2M586 59.5h7M586 62.5h6M587 68.5h5M586.5 60v2M586.5 67v1M592.5 63v5M595 59.5h7M595 62.5h6M596 68.5h5M595.5 60v2M595.5 67v1M601.5 63v5M615 60.5h2M613 68.5h7M613.5 62v1M614.5 61v1M616.5 59v1M616.5 61v7M624 59.5h3M624 63.5h3M624 68.5h3M622.5 61v1M622.5 65v2M623.5 60v1M623.5 62v1M623.5 64v1M623.5 67v1M627.5 60v1M627.5 62v1M627.5 64v1M627.5 67v1M628.5 61v1M628.5 65v2M631 64.5h7M640 60.5h2M645 67.5h2M640.5 59v1M640.5 61v8M642.5 61v2M643.5 63v2M644.5 65v2M646.5 59v8M646.5 68v1M650 62.5h5M650 68.5h5M649.5 63v5M655.5 63v5M658.5 62v2M659.5 64v2M660.5 66v2M661.5 68v1M662.5 66v2M663.5 64v2M664.5 62v2M667 64.5h7M677 59.5h5M676 68.5h7M676.5 60v1M676.5 67v1M677.5 66v1M678.5 65v1M679.5 64v1M680.5 63v1M681.5 62v1M682.5 60v2M687 59.5h3M687 68.5h3M685.5 61v6M686.5 60v1M686.5 67v1M690.5 60v1M690.5 67v1M691.5 61v6M696 59.5h3M696 68.5h3M694.5 61v6M695.5 60v1M695.5 67v1M699.5 60v1M699.5 67v1M700.5 61v6M703 59.5h7M703 62.5h6M704 68.5h5M703.5 60v2M703.5 67v1M709.5 63v5M363 86.5h5M363 95.5h5M365.5 87v8M371 89.5h6M371.5 90v6M374.5 90v5M377.5 90v6M381 89.5h5M381 92.5h6M385 94.5h2M381 95.5h4M380.5 93v2M386.5 90v2M386.5 93v1M386.5 95v1M390 89.5h4M390 93.5h4M390 95.5h5M390 98.5h5M389.5 90v3M389.5 94v1M389.5 96v2M394.5 90v3M395.5 89v1M395.5 96v2M399 89.5h5M398 92.5h7M399 95.5h5M398.5 90v2M398.5 93v2M404.5 90v2M407 90.5h7M407 93.5h7M416 86.5h7M416 89.5h6M417 95.5h5M416.5 87v2M416.5 94v1M422.5 90v5M426 86.5h5M426 91.5h6M426 95.5h4M425.5 87v4M430.5 94v1M431.5 87v4M431.5 92v2M435 95.5h4M434.5 89v6M439.5 89v6M440.5 95v1M447 87.5h2M443 92.5h7M443.5 91v1M444.5 90v1M445.5 89v1M446.5 88v1M448.5 86v1M448.5 88v4M448.5 93v3M454 86.5h3M454 95.5h3M452.5 88v6M453.5 87v1M453.5 94v1M457.5 87v1M457.5 94v1M458.5 88v6M463 86.5h3M463 95.5h3M461.5 88v6M462.5 87v1M462.5 94v1M466.5 87v1M466.5 94v1M467.5 88v6M470 89.5h6M470 95.5h6M470.5 90v5M470.5 96v3M476.5 90v5M482 94.5h2M482 95.5h2M482.5 97v2M483.5 96v1M498 86.5h5M498 90.5h5M498 95.5h5M497.5 87v3M497.5 93v2M503.5 87v2M503.5 91v4M507 95.5h4M506.5 89v6M511.5 89v6M512.5 95v1M515 89.5h6M515.5 90v6M518.5 90v5M521.5 90v6M534 89.5h5M534 95.5h5M533.5 90v5M539.5 90v5M545 86.5h3M542 91.5h5M544.5 87v4M544.5 92v4M548.5 87v2M561 86.5h3M561 95.5h5M563.5 87v8M571 86.5h2M570 89.5h3M570 95.5h5M572.5 90v5M578 89.5h6M578.5 90v6M584.5 90v6M588 89.5h5M587 92.5h7M588 95.5h5M587.5 90v2M587.5 93v2M593.5 90v2M597 89.5h5M597 92.5h5M597 95.5h5M596.5 90v2M596.5 94v1M602.5 90v1M602.5 93v2M614 86.5h7M617 90.5h3M615 95.5h5M614.5 94v1M617.5 89v1M618.5 88v1M619.5 87v1M620.5 91v4M623 86.5h7M626 90.5h3M624 95.5h5M623.5 94v1M626.5 89v1M627.5 88v1M628.5 87v1M629.5 91v4M634 86.5h3M634 95.5h3M632.5 88v6M633.5 87v1M633.5 94v1M637.5 87v1M637.5 94v1M638.5 88v6M641 91.5h7M650 86.5h7M653 90.5h3M651 95.5h5M650.5 94v1M653.5 89v1M654.5 88v1M655.5 87v1M656.5 91v4M659 86.5h7M662 90.5h3M660 95.5h5M659.5 94v1M662.5 89v1M663.5 88v1M664.5 87v1M665.5 91v4M669 86.5h5M669 91.5h6M669 95.5h4M668.5 87v4M673.5 94v1M674.5 87v4M674.5 92v2M440 114.5h5M440 123.5h5M440.5 115v8M445.5 115v1M445.5 122v1M446.5 116v6M450 117.5h5M449 120.5h7M450 123.5h5M449.5 118v2M449.5 121v2M455.5 118v2M461 114.5h3M458 119.5h5M460.5 115v4M460.5 120v4M464.5 115v2M469 114.5h2M468 117.5h3M468 123.5h5M470.5 118v5M476 117.5h6M476.5 118v6M482.5 118v6M486 117.5h5M485 120.5h7M486 123.5h5M485.5 118v2M485.5 121v2M491.5 118v2M504 117.5h5M504 120.5h6M508 122.5h2M504 123.5h4M503.5 121v2M509.5 118v2M509.5 121v1M509.5 123v1M512 117.5h6M512.5 118v6M518.5 118v6M522 117.5h6M526 122.5h2M522 123.5h4M521.5 118v5M527.5 114v3M527.5 118v4M527.5 123v1M539 114.5h7M539 118.5h5M539 123.5h7M539.5 115v3M539.5 119v4M549 117.5h6M553 122.5h2M549 123.5h4M548.5 118v5M554.5 114v3M554.5 118v4M554.5 123v1M559 114.5h2M558 117.5h3M558 123.5h5M560.5 118v5M566 117.5h6M569 123.5h3M568.5 115v2M568.5 118v5M572.5 122v1M584 120.5h7M584.5 117v3M584.5 121v3M585.5 116v1M586.5 115v1M587.5 114v1M588.5 115v1M589.5 116v1M590.5 117v3M590.5 121v3M593 117.5h6M593 123.5h6M593.5 118v5M593.5 124v3M599.5 118v5M603 117.5h5M602 120.5h7M603 123.5h5M602.5 118v2M602.5 121v2M608.5 118v2M611 117.5h2M614 117.5h3M612 118.5h2M612.5 119v5M617.5 118v2M620 117.5h6M623 123.5h3M622.5 115v2M622.5 118v5M626.5 122v1M630 123.5h4M629.5 117v6M634.5 117v6M635.5 123v1M638 117.5h2M641 117.5h3M639 118.5h2M639.5 119v5M644.5 118v2M648 117.5h5M647 120.5h7M648 123.5h5M647.5 118v2M647.5 121v2M653.5 118v2M657 117.5h5M657 120.5h5M657 123.5h5M656.5 118v2M656.5 122v1M662.5 118v1M662.5 121v2" stroke="#00ff00" stroke-width="1" fill="none" shape-rendering="crispEdges"/>
<path d="M44 170.5h7M47 174.5h3M45 179.5h5M44.5 178v1M47.5 173v1M48.5 172v1M49.5 171v1M50.5 175v4M56 178.5h2M56 179.5h2M64 170.5h3M64 179.5h3M62.5 172v6M63.5 171v1M63.5 178v1M67.5 171v1M67.5 178v1M68.5 172v6M73 170.5h3M73 179.5h3M71.5 172v6M72.5 171v1M72.5 178v1M76.5 171v1M76.5 178v1M77.5 172v6M80 170.5h7M80 174.5h5M80 179.5h7M80.5 171v3M80.5 175v4M89 170.5h7M89 173.5h6M90 179.5h5M89.5 171v2M89.5 178v1M95.5 174v5M45 289.5h5M44 298.5h7M44.5 290v1M44.5 297v1M45.5 296v1M46.5 295v1M47.5 294v1M48.5 293v1M49.5 292v1M50.5 290v2M56 297.5h2M56 298.5h2M62 289.5h7M62 292.5h6M63 298.5h5M62.5 290v2M62.5 297v1M68.5 293v5M73 289.5h3M73 298.5h3M71.5 291v6M72.5 290v1M72.5 297v1M76.5 290v1M76.5 297v1M77.5 291v6M80 289.5h7M80 293.5h5M80 298.5h7M80.5 290v3M80.5 294v4M89 289.5h7M89 292.5h6M90 298.5h5M89.5 290v2M89.5 297v1M95.5 293v5M45 406.5h5M44 415.5h7M44.5 407v1M44.5 414v1M45.5 413v1M46.5 412v1M47.5 411v1M48.5 410v1M49.5 409v1M50.5 407v2M56 414.5h2M56 415.5h2M64 406.5h3M64 415.5h3M62.5 408v6M63.5 407v1M63.5 414v1M67.5 407v1M67.5 414v1M68.5 408v6M73 406.5h3M73 415.5h3M71.5 408v6M72.5 407v1M72.5 414v1M76.5 407v1M76.5 414v1M77.5 408v6M80 406.5h7M80 410.5h5M80 415.5h7M80.5 407v3M80.5 411v4M89 406.5h7M89 409.5h6M90 415.5h5M89.5 407v2M89.5 414v1M95.5 410v5M46 526.5h2M44 534.5h7M44.5 528v1M45.5 527v1M47.5 525v1M47.5 527v7M56 533.5h2M56 534.5h2M62 525.5h7M62 528.5h6M63 534.5h5M62.5 526v2M62.5 533v1M68.5 529v5M73 525.5h3M73 534.5h3M71.5 527v6M72.5 526v1M72.5 533v1M76.5 526v1M76.5 533v1M77.5 527v6M80 525.5h7M80 529.5h5M80 534.5h7M80.5 526v3M80.5 530v4M89 525.5h7M89 528.5h6M90 534.5h5M89.5 526v2M89.5 533v1M95.5 529v5M46 644.5h2M44 652.5h7M44.5 646v1M45.5 645v1M47.5 643v1M47.5 645v7M56 651.5h2M56 652.5h2M64 643.5h3M64 652.5h3M62.5 645v6M63.5 644v1M63.5 651v1M67.5 644v1M67.5 651v1M68.5 645v6M73 643.5h3M73 652.5h3M71.5 645v6M72.5 644v1M72.5 651v1M76.5 644v1M76.5 651v1M77.5 645v6M80 643.5h7M80 647.5h5M80 652.5h7M80.5 644v3M80.5 648v4M89 643.5h7M89 646.5h6M90 652.5h5M89.5 644v2M89.5 651v1M95.5 647v5M59 761.5h7M59 764.5h6M60 770.5h5M59.5 762v2M59.5 769v1M65.5 765v5M70 761.5h3M70 770.5h3M68.5 763v6M69.5 762v1M69.5 769v1M73.5 762v1M73.5 769v1M74.5 763v6M79 761.5h3M79 770.5h3M77.5 763v6M78.5 762v1M78.5 769v1M82.5 762v1M82.5 769v1M83.5 763v6M88 761.5h3M88 770.5h3M86.5 763v6M87.5 762v1M87.5 769v1M91.5 762v1M91.5 769v1M92.5 763v6M97 761.5h3M97 770.5h3M95.5 763v6M96.5 762v1M96.5 769v1M100.5 762v1M100.5 769v1M101.5 763v6M124 879.5h3M124 888.5h3M122.5 881v6M123.5 880v1M123.5 887v1M127.5 880v1M127.5 887v1M128.5 881v6M165 918.5h3M165 927.5h3M163.5 920v6M164.5 919v1M164.5 926v1M168.5 919v1M168.5 926v1M169.5 920v6M337 918.5h7M337 921.5h6M338 927.5h5M337.5 919v2M337.5 926v1M343.5 922v5M348 918.5h3M348 927.5h3M346.5 920v6M347.5 919v1M347.5 926v1M351.5 919v1M351.5 926v1M352.5 920v6M513 919.5h2M511 927.5h7M511.5 921v1M512.5 920v1M514.5 918v1M514.5 920v7M522 918.5h3M522 927.5h3M520.5 920v6M521.5 919v1M521.5 926v1M525.5 919v1M525.5 926v1M526.5 920v6M531 918.5h3M531 927.5h3M529.5 920v6M530.5 919v1M530.5 926v1M534.5 919v1M534.5 926v1M535.5 920v6M696 919.5h2M694 927.5h7M694.5 921v1M695.5 920v1M697.5 918v1M697.5 920v7M703 918.5h7M703 921.5h6M704 927.5h5M703.5 919v2M703.5 926v1M709.5 922v5M714 918.5h3M714 927.5h3M712.5 920v6M713.5 919v1M713.5 926v1M717.5 919v1M717.5 926v1M718.5 920v6M878 918.5h5M877 927.5h7M877.5 919v1M877.5 926v1M878.5 925v1M879.5 924v1M880.5 923v1M881.5 922v1M882.5 921v1M883.5 919v2M888 918.5h3M888 927.5h3M886.5 920v6M887.5 919v1M887.5 926v1M891.5 919v1M891.5 926v1M892.5 920v6M897 918.5h3M897 927.5h3M895.5 920v6M896.5 919v1M896.5 926v1M900.5 919v1M900.5 926v1M901.5 920v6M1059 918.5h5M1058 927.5h7M1058.5 919v1M1058.5 926v1M1059.5 925v1M1060.5 924v1M1061.5 923v1M1062.5 922v1M1063.5 921v1M1064.5 919v2M1067 918.5h7M1067 921.5h6M1068 927.5h5M1067.5 919v2M1067.5 926v1M1073.5 922v5M1078 918.5h3M1078 927.5h3M1076.5 920v6M1077.5 919v1M1077.5 926v1M1081.5 919v1M1081.5 926v1M1082.5 920v6" stroke="#ffff00" stroke-width="1" fill="none" shape-rendering="crispEdges"/>
<path d="M222 156.5h2M220 164.5h7M220.5 158v1M221.5 157v1M223.5 155v1M223.5 157v7M254 155.5h5M253 164.5h7M253.5 156v1M253.5 163v1M254.5 162v1M255.5 161v1M256.5 160v1M257.5 159v1M258.5 158v1M259.5 156v2M284 155.5h7M287 159.5h3M285 164.5h5M284.5 163v1M287.5 158v1M288.5 157v1M289.5 156v1M290.5 160v4M321 156.5h2M317 161.5h7M317.5 160v1M318.5 159v1M319.5 158v1M320.5 157v1M322.5 155v1M322.5 157v4M322.5 162v3M351 155.5h7M351 158.5h6M352 164.5h5M351.5 156v2M351.5 163v1M357.5 159v5M385 155.5h4M383 159.5h6M384 164.5h5M383.5 157v2M383.5 160v4M384.5 156v1M389.5 160v4M415 155.5h7M417.5 163v2M418.5 161v2M419.5 159v2M420.5 157v2M421.5 156v1M450 155.5h3M450 159.5h3M450 164.5h3M448.5 157v1M448.5 161v2M449.5 156v1M449.5 158v1M449.5 160v1M449.5 163v1M453.5 156v1M453.5 158v1M453.5 160v1M453.5 163v1M454.5 157v1M454.5 161v2M482 155.5h5M482 160.5h6M482 164.5h4M481.5 156v4M486.5 163v1M487.5 156v4M487.5 161v2M507 156.5h2M505 164.5h7M505.5 158v1M506.5 157v1M508.5 155v1M508.5 157v7M516 155.5h3M516 164.5h3M514.5 157v6M515.5 156v1M515.5 163v1M519.5 156v1M519.5 163v1M520.5 157v6M541 156.5h2M539 164.5h7M539.5 158v1M540.5 157v1M542.5 155v1M542.5 157v7M550 156.5h2M548 164.5h7M548.5 158v1M549.5 157v1M551.5 155v1M551.5 157v7M573 156.5h2M571 164.5h7M571.5 158v1M572.5 157v1M574.5 155v1M574.5 157v7M581 155.5h5M580 164.5h7M580.5 156v1M580.5 163v1M581.5 162v1M582.5 161v1M583.5 160v1M584.5 159v1M585.5 158v1M586.5 156v2M605 156.5h2M603 164.5h7M603.5 158v1M604.5 157v1M606.5 155v1M606.5 157v7M612 155.5h7M615 159.5h3M613 164.5h5M612.5 163v1M615.5 158v1M616.5 157v1M617.5 156v1M618.5 160v4M638 156.5h2M636 164.5h7M636.5 158v1M637.5 157v1M639.5 155v1M639.5 157v7M649 156.5h2M645 161.5h7M645.5 160v1M646.5 159v1M647.5 158v1M648.5 157v1M650.5 155v1M650.5 157v4M650.5 162v3M671 156.5h2M669 164.5h7M669.5 158v1M670.5 157v1M672.5 155v1M672.5 157v7M678 155.5h7M678 158.5h6M679 164.5h5M678.5 156v2M678.5 163v1M684.5 159v5M703 156.5h2M701 164.5h7M701.5 158v1M702.5 157v1M704.5 155v1M704.5 157v7M712 155.5h4M710 159.5h6M711 164.5h5M710.5 157v2M710.5 160v4M711.5 156v1M716.5 160v4M736 156.5h2M734 164.5h7M734.5 158v1M735.5 157v1M737.5 155v1M737.5 157v7M743 155.5h7M745.5 163v2M746.5 161v2M747.5 159v2M748.5 157v2M749.5 156v1M768 156.5h2M766 164.5h7M766.5 158v1M767.5 157v1M769.5 155v1M769.5 157v7M777 155.5h3M777 159.5h3M777 164.5h3M775.5 157v1M775.5 161v2M776.5 156v1M776.5 158v1M776.5 160v1M776.5 163v1M780.5 156v1M780.5 158v1M780.5 160v1M780.5 163v1M781.5 157v1M781.5 161v2M805 156.5h2M803 164.5h7M803.5 158v1M804.5 157v1M806.5 155v1M806.5 157v7M813 155.5h5M813 160.5h6M813 164.5h4M812.5 156v4M817.5 163v1M818.5 156v4M818.5 161v2M867 155.5h5M866 164.5h7M866.5 156v1M866.5 163v1M867.5 162v1M868.5 161v1M869.5 160v1M870.5 159v1M871.5 158v1M872.5 156v2M877 155.5h3M877 164.5h3M875.5 157v6M876.5 156v1M876.5 163v1M880.5 156v1M880.5 163v1M881.5 157v6M899 155.5h5M898 164.5h7M898.5 156v1M898.5 163v1M899.5 162v1M900.5 161v1M901.5 160v1M902.5 159v1M903.5 158v1M904.5 156v2M909 156.5h2M907 164.5h7M907.5 158v1M908.5 157v1M910.5 155v1M910.5 157v7M930 155.5h5M929 164.5h7M929.5 156v1M929.5 163v1M930.5 162v1M931.5 161v1M932.5 160v1M933.5 159v1M934.5 158v1M935.5 156v2M939 155.5h5M938 164.5h7M938.5 156v1M938.5 163v1M939.5 162v1M940.5 161v1M941.5 160v1M942.5 159v1M943.5 158v1M944.5 156v2M963 155.5h5M962 164.5h7M962.5 156v1M962.5 163v1M963.5 162v1M964.5 161v1M965.5 160v1M966.5 159v1M967.5 158v1M968.5 156v2M971 155.5h7M974 159.5h3M972 164.5h5M971.5 163v1M974.5 158v1M975.5 157v1M976.5 156v1M977.5 160v4M995 155.5h5M994 164.5h7M994.5 156v1M994.5 163v1M995.5 162v1M996.5 161v1M997.5 160v1M998.5 159v1M999.5 158v1M1000.5 156v2M1007 156.5h2M1003 161.5h7M1003.5 160v1M1004.5 159v1M1005.5 158v1M1006.5 157v1M1008.5 155v1M1008.5 157v4M1008.5 162v3M1028 155.5h5M1027 164.5h7M1027.5 156v1M1027.5 163v1M1028.5 162v1M1029.5 161v1M1030.5 160v1M1031.5 159v1M1032.5 158v1M1033.5 156v2M1036 155.5h7M1036 158.5h6M1037 164.5h5M1036.5 156v2M1036.5 163v1M1042.5 159v5" stroke="#fff" stroke-width="1" fill="none" shape-rendering="crispEdges"/>
<g shape-rendering="crispEdges"><rect x="651" y="26" width="1" height="944" fill="#f00"/><rect x="3" y="631" width="1273" height="1" fill="#f00"/></g>
</svg></div></body></html>
